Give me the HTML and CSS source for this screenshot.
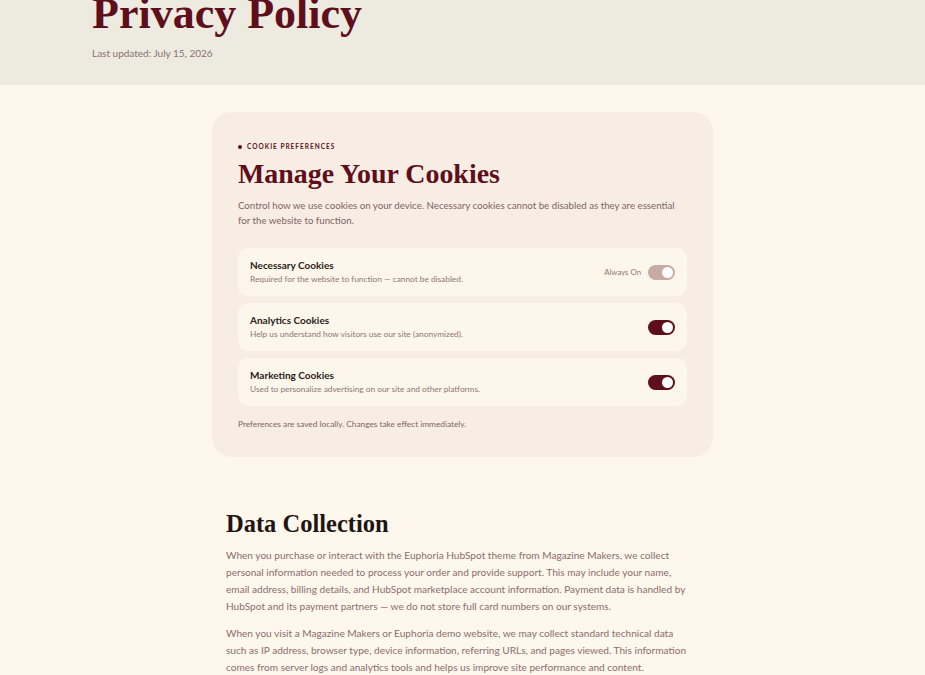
FILE: index.html
```html
<!DOCTYPE html>
<html lang="en">
<head>
<meta charset="utf-8">
<title>Privacy Policy</title>
<link rel="stylesheet" href="styles.css">
</head>
<body>
<header class="hero">
  <h1 class="hero-title">Privacy Policy</h1>
  <p class="hero-meta">Last updated: July 15, 2026</p>
</header>
<main class="main">
  <section class="cookie-card">
    <div class="eyebrow"><span class="eyebrow-dot"></span>COOKIE PREFERENCES</div>
    <h2 class="cookie-title">Manage Your Cookies</h2>
    <p class="cookie-intro">Control how we use cookies on your device. Necessary cookies cannot be disabled as they are essential for the website to function.</p>
    <div class="cookie-list">
      <div class="cookie-row">
        <div class="cookie-text">
          <div class="cookie-name">Necessary Cookies</div>
          <div class="cookie-desc">Required for the website to function — cannot be disabled.</div>
        </div>
        <div class="cookie-control">
          <span class="always-on">Always On</span>
          <span class="toggle toggle-locked"><span class="knob"></span></span>
        </div>
      </div>
      <div class="cookie-row">
        <div class="cookie-text">
          <div class="cookie-name">Analytics Cookies</div>
          <div class="cookie-desc">Help us understand how visitors use our site (anonymized).</div>
        </div>
        <div class="cookie-control">
          <span class="toggle"><span class="knob"></span></span>
        </div>
      </div>
      <div class="cookie-row">
        <div class="cookie-text">
          <div class="cookie-name">Marketing Cookies</div>
          <div class="cookie-desc">Used to personalize advertising on our site and other platforms.</div>
        </div>
        <div class="cookie-control">
          <span class="toggle"><span class="knob"></span></span>
        </div>
      </div>
    </div>
    <p class="cookie-note">Preferences are saved locally. Changes take effect immediately.</p>
  </section>

  <section class="policy">
    <h2 class="policy-title">Data Collection</h2>
    <p class="policy-text">When you purchase or interact with the Euphoria HubSpot theme from Magazine Makers, we collect personal information needed to process your order and provide support. This may include your name, email address, billing details, and HubSpot marketplace account information. Payment data is handled by HubSpot and its payment partners — we do not store full card numbers on our systems.</p>
    <p class="policy-text">When you visit a Magazine Makers or Euphoria demo website, we may collect standard technical data such as IP address, browser type, device information, referring URLs, and pages viewed. This information comes from server logs and analytics tools and helps us improve site performance and content.</p>
  </section>
</main>
</body>
</html>
```

FILE: styles.css
```css
* { box-sizing: border-box; }

html, body {
  margin: 0;
  padding: 0;
}

body {
  background: #fef7ec;
  font-family: "Lato", "Noto Sans", sans-serif;
  color: #8a6d6d;
  overflow: hidden;
}

.hero {
  background: #edeae0;
  height: 85px;
  padding: 0 92px;
  overflow: hidden;
}

.hero-title {
  margin: -10px 0 0;
  font-family: "Liberation Serif", serif;
  font-weight: 700;
  font-size: 44px;
  line-height: 1.1;
  color: #5e0f1b;
}

.hero-meta {
  margin: 8px 0 0;
  font-size: 10px;
  line-height: 14px;
  color: #8a7070;
}

.main {
  padding: 27px 0 40px;
}

.cookie-card {
  width: 501px;
  margin: 0 auto;
  background: #f7ede3;
  border-radius: 20px;
  padding: 30px 26px 27px;
}

.eyebrow {
  display: flex;
  align-items: center;
  gap: 5px;
  font-size: 6.5px;
  line-height: 10px;
  font-weight: 700;
  letter-spacing: 1px;
  color: #5e0f1b;
}

.eyebrow-dot {
  width: 4px;
  height: 4px;
  border-radius: 50%;
  background: #5e0f1b;
}

.cookie-title {
  margin: 6px 0 0;
  font-family: "Liberation Serif", serif;
  font-weight: 700;
  font-size: 27.9px;
  line-height: 32px;
  color: #5e0f1b;
}

.cookie-intro {
  margin: 8px 0 0;
  font-size: 9.7px;
  line-height: 15px;
  color: #7f6565;
}

.cookie-list {
  margin-top: 20px;
  display: flex;
  flex-direction: column;
  gap: 7px;
}

.cookie-row {
  height: 48px;
  background: #fdf6ea;
  border-radius: 10px;
  padding: 0 12px;
  display: flex;
  align-items: center;
  justify-content: space-between;
}

.cookie-text {
  display: flex;
  flex-direction: column;
  gap: 1px;
}

.cookie-name {
  font-size: 10px;
  line-height: 13px;
  font-weight: 700;
  color: #2a1c1c;
}

.cookie-desc {
  font-size: 8.3px;
  line-height: 13px;
  color: #8d7676;
}

.cookie-control {
  display: flex;
  align-items: center;
  gap: 7px;
}

.always-on {
  font-size: 7.8px;
  color: #8d7676;
}

.toggle {
  position: relative;
  width: 27px;
  height: 15px;
  border-radius: 8px;
  background: #5e0f1b;
  display: block;
}

.toggle-locked {
  background: #c9aba6;
}

.knob {
  position: absolute;
  top: 2px;
  right: 2px;
  width: 11px;
  height: 11px;
  border-radius: 50%;
  background: #ffffff;
}

.cookie-note {
  margin: 12px 0 0;
  font-size: 8.3px;
  line-height: 12px;
  color: #7f6565;
}

.policy {
  width: 473px;
  margin: 51px auto 0;
}

.policy-title {
  margin: 0;
  font-family: "Liberation Serif", serif;
  font-weight: 700;
  font-size: 24.5px;
  line-height: 31px;
  color: #1e1515;
}

.policy-text {
  max-width: 468px;
  margin: 8px 0 0;
  font-size: 10.1px;
  line-height: 17px;
  color: #8a6d6d;
}

.policy-text + .policy-text {
  margin-top: 10px;
}
```
